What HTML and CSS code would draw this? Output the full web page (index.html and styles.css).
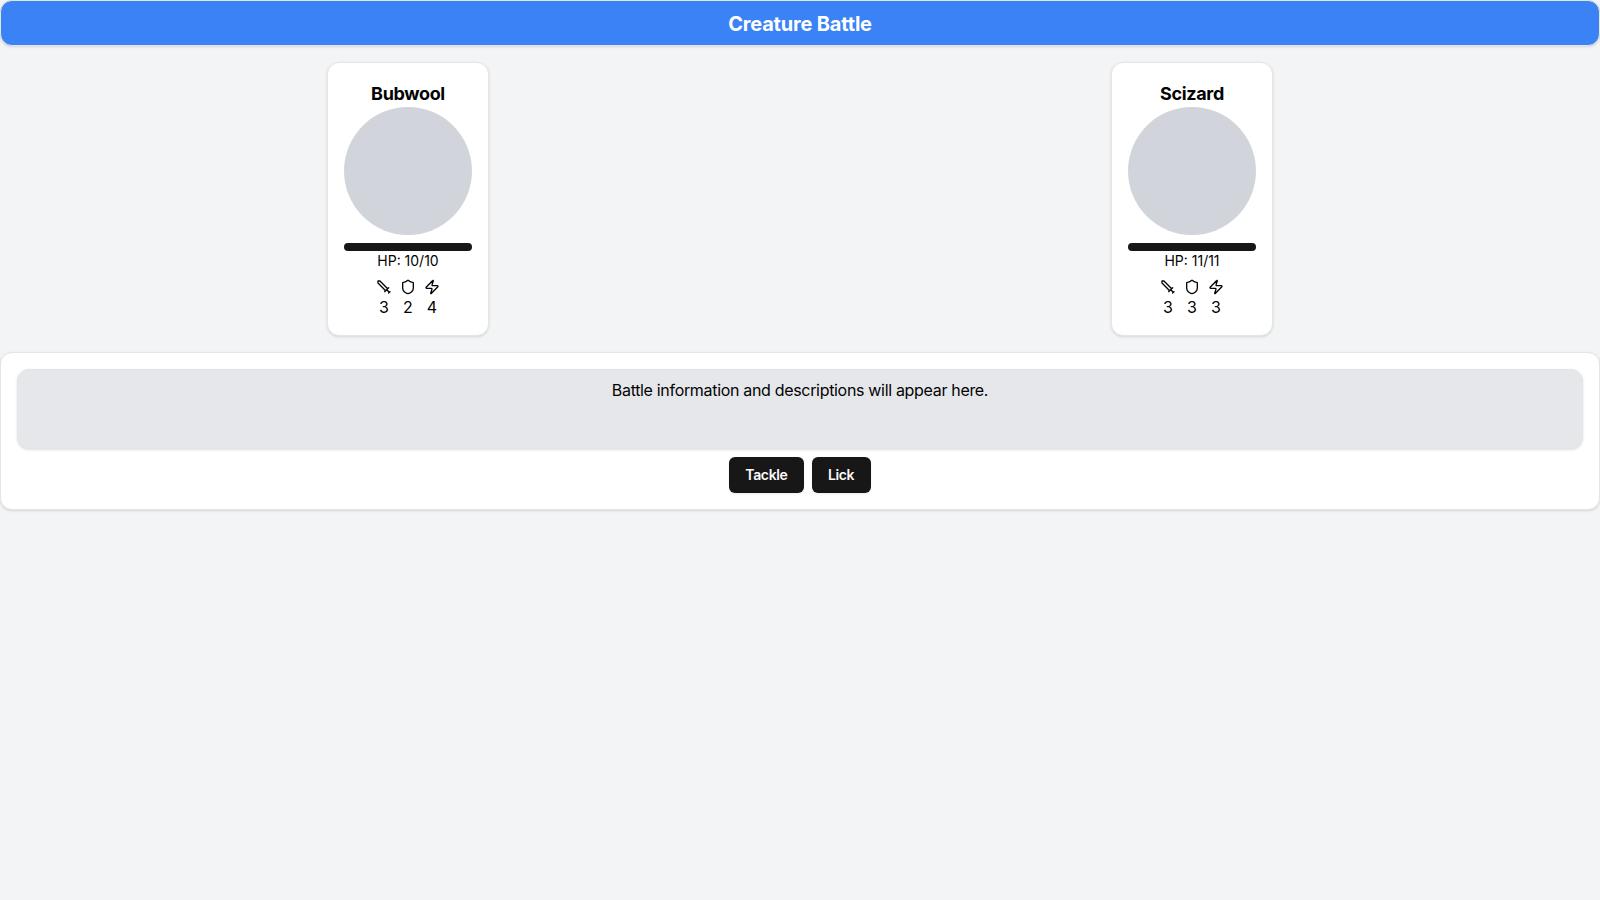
FILE: index.html
```html
<!DOCTYPE html>
<html lang="en">
<head>
<meta charset="utf-8">
<title>Creature Battle</title>
<link rel="stylesheet" href="styles.css">
</head>
<body>
<svg width="0" height="0" class="sprite" aria-hidden="true">
  <symbol id="sword" viewBox="0 0 24 24"><path d="M14.5 17.5 3 6V3h3l11.5 11.5M13 19l6-6M16 16l4 4M19 21l2-2"/></symbol>
  <symbol id="shield" viewBox="0 0 24 24"><path d="M20 13c0 5-3.5 7.5-7.66 8.95a1 1 0 0 1-.67-.01C7.5 20.5 4 18 4 13V6a1 1 0 0 1 1-1c2 0 4.500-1.200 6.240-2.720a1.170 1.170 0 0 1 1.520 0C14.510 3.810 17 5 19 5a1 1 0 0 1 1 1z"/></symbol>
  <symbol id="zap" viewBox="0 0 24 24"><path d="M4 14a1 1 0 0 1-.78-1.63l9.9-10.2a.5.5 0 0 1 .86.46l-1.92 6.02A1 1 0 0 0 13 10h7a1 1 0 0 1 .78 1.63l-9.9 10.2a.5.5 0 0 1-.86-.46l1.92-6.02A1 1 0 0 0 11 14z"/></symbol>
</svg>
<header class="card header"><h1 class="title">Creature Battle</h1></header>
<main class="arena">
  <section class="card creature">
    <h2 class="name">Bubwool</h2>
    <div class="avatar"></div>
    <div class="health"></div>
    <p class="hp">HP: 10/10</p>
    <div class="stats">
      <div class="stat"><svg class="icon"><use href="#sword"/></svg><span>3</span></div>
      <div class="stat"><svg class="icon"><use href="#shield"/></svg><span>2</span></div>
      <div class="stat"><svg class="icon"><use href="#zap"/></svg><span>4</span></div>
    </div>
  </section>
  <section class="card creature">
    <h2 class="name">Scizard</h2>
    <div class="avatar"></div>
    <div class="health"></div>
    <p class="hp">HP: 11/11</p>
    <div class="stats">
      <div class="stat"><svg class="icon"><use href="#sword"/></svg><span>3</span></div>
      <div class="stat"><svg class="icon"><use href="#shield"/></svg><span>3</span></div>
      <div class="stat"><svg class="icon"><use href="#zap"/></svg><span>3</span></div>
    </div>
  </section>
</main>
<section class="card panel">
  <div class="card log">Battle information and descriptions will appear here.</div>
  <div class="actions">
    <button class="button tackle">Tackle</button>
    <button class="button lick">Lick</button>
  </div>
</section>
</body>
</html>
```
FILE: styles.css
```css
* { box-sizing: border-box; margin: 0; padding: 0; }
body {
  min-height: 100vh;
  background: #f3f4f6;
  color: #030303;
  font: 16px/24px Inter, "Liberation Sans", sans-serif;
}
.sprite { display: block; }
.card {
  border: 1px solid #e5e5e5;
  border-radius: 12px;
  background: #fff;
  box-shadow: 0 1px 3px rgba(0, 0, 0, .1), 0 1px 2px -1px rgba(0, 0, 0, .1);
}
.header { padding: 8px; background: #3b82f6; color: #fff; text-align: center; }
.title { height: 28px; font-size: 20px; line-height: 30px; font-weight: 700; letter-spacing: -.18px; }
.arena {
  display: grid;
  grid-template-columns: 1fr 1fr;
  justify-items: center;
  padding: 16px;
}
.creature {
  display: flex;
  flex-direction: column;
  align-items: center;
  width: 162px;
  padding: 16px;
}
.name { height: 28px; font-size: 18px; line-height: 30px; font-weight: 700; letter-spacing: -.35px; }
.avatar { width: 128px; height: 128px; border-radius: 50%; background: #d1d5db; }
.health { width: 100%; height: 8px; margin-top: 8px; border-radius: 4px; background: #171717; }
.hp { font-size: 14px; line-height: 20px; letter-spacing: 0; }
.stats { display: flex; gap: 8px; margin-top: 8px; }
.stat { display: flex; flex-direction: column; align-items: center; width: 16px; }
.icon {
  display: block;
  width: 16px;
  height: 16px;
  fill: none;
  stroke: currentColor;
  stroke-width: 2;
  stroke-linecap: round;
  stroke-linejoin: round;
}
.panel { padding: 16px; }
.log { height: 80px; padding: 8px; background: #e5e7eb; text-align: center; letter-spacing: -.32px; }
.actions { display: flex; justify-content: center; gap: 8px; margin-top: 8px; }
.button {
  height: 36px;
  border: 0;
  border-radius: 6px;
  background: #171717;
  color: #fafafa;
  font: 600 14px/20px Inter, sans-serif;
  letter-spacing: -.35px;
  box-shadow: 0 1px 2px rgba(0, 0, 0, .08);
}
.tackle { width: 74.2px; }
.lick { width: 59.2px; }
```
